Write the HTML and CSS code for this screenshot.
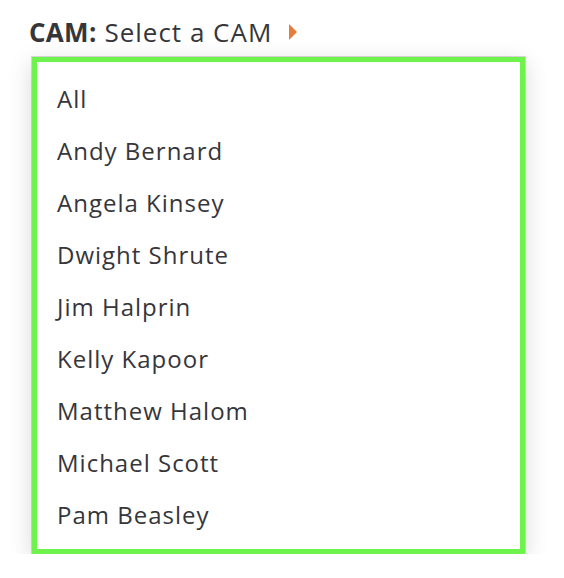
FILE: index.html
```html
<!DOCTYPE html>
<html>
<head>
<meta charset="utf-8">
<link rel="stylesheet" href="styles.css">
</head>
<body>
<div class="wrap">
  <div class="label"><span class="key">CAM:</span> Select a CAM <span class="caret"></span></div>
  <ul class="menu">
    <li>All</li>
    <li>Andy Bernard</li>
    <li>Angela Kinsey</li>
    <li>Dwight Shrute</li>
    <li>Jim Halprin</li>
    <li>Kelly Kapoor</li>
    <li>Matthew Halom</li>
    <li>Michael Scott</li>
    <li>Pam Beasley</li>
  </ul>
</div>
</body>
</html>
```

FILE: styles.css
```css
html, body {
  margin: 0;
  padding: 0;
  background: #ffffff;
}
body {
  font-family: "Open Sans", "Noto Sans", sans-serif;
  color: #36363a;
}
.wrap {
  padding: 13px 0 0 29px;
}
.label {
  font-size: 26px;
  line-height: 38px;
  letter-spacing: 1px;
  display: flex;
  align-items: center;
  white-space: pre;
}
.key {
  font-weight: 700;
  letter-spacing: 0.3px;
}
.caret {
  display: inline-block;
  width: 0;
  height: 0;
  margin-left: 9px;
  border-top: 8px solid transparent;
  border-bottom: 8px solid transparent;
  border-left: 8px solid #e57c3c;
}
.menu {
  list-style: none;
  margin: 6px 0 0 3px;
  padding: 11px 0 8px 20px;
  width: 463px;
  border: 5px solid #6ef24c;
  box-shadow: 0 0 0 1px rgba(0, 0, 0, 0.14), 0 6px 22px rgba(0, 0, 0, 0.16);
  display: flex;
  flex-direction: column;
}
.menu li {
  font-size: 24px;
  line-height: 52px;
  height: 52px;
  letter-spacing: 1px;
}
```
